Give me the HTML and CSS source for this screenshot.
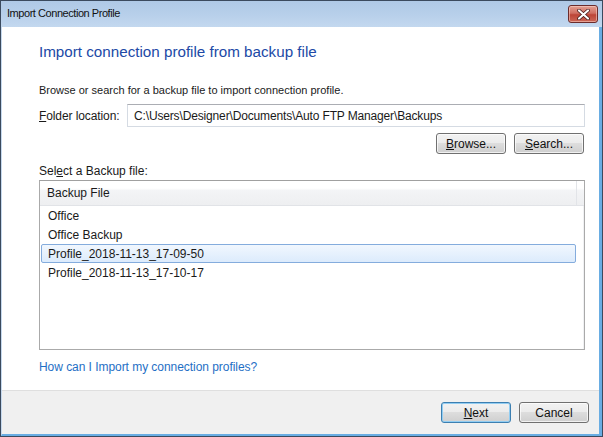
FILE: index.html
```html
<!DOCTYPE html>
<html>
<head>
<meta charset="utf-8">
<title>Import Connection Profile</title>
<link rel="stylesheet" href="styles.css">
</head>
<body>
<div class="window">
  <div class="titlebar">
    <span class="title">Import Connection Profile</span>
    <button class="close" aria-label="Close">
      <svg width="13" height="11" viewBox="0 0 13 11"><path d="M2 1.5 L11 9.5 M11 1.5 L2 9.5" stroke="#3a1414" stroke-width="3.6" stroke-linecap="round"/><path d="M2 1.5 L11 9.5 M11 1.5 L2 9.5" stroke="#ffffff" stroke-width="2.2" stroke-linecap="round"/></svg>
    </button>
  </div>
  <div class="client">
    <div class="content">
      <h1 class="heading">Import connection profile from backup file</h1>
      <p class="desc">Browse or search for a backup file to import connection profile.</p>
      <div class="folder-row">
        <label class="label"><u>F</u>older location:</label>
        <div class="input">C:\Users\Designer\Documents\Auto FTP Manager\Backups</div>
      </div>
      <div class="btn-row">
        <button class="btn"><u>B</u>rowse...</button>
        <button class="btn"><u>S</u>earch...</button>
      </div>
      <div class="select-label">Sel<u>e</u>ct a Backup file:</div>
      <div class="list">
        <div class="list-header">
          <div class="col">Backup File</div>
          <div class="col-end"></div>
        </div>
        <div class="rows">
          <div class="row">Office</div>
          <div class="row">Office Backup</div>
          <div class="row selected">Profile_2018-11-13_17-09-50</div>
          <div class="row">Profile_2018-11-13_17-10-17</div>
        </div>
      </div>
      <a class="link" href="#">How can I Import my connection profiles?</a>
    </div>
    <div class="footer">
      <button class="btn default"><u>N</u>ext</button>
      <button class="btn">Cancel</button>
    </div>
  </div>
</div>
</body>
</html>
```

FILE: styles.css
```css
html, body {
  margin: 0;
  padding: 0;
  background: #ffffff;
}

body {
  font-family: "Liberation Sans", Arial, sans-serif;
  font-size: 12px;
  color: #1a1a1a;
}

.window {
  width: 603px;
  height: 437px;
  box-sizing: border-box;
  border: 1px solid #3b4a5e;
  display: flex;
  flex-direction: column;
  background: #b9d1ea;
}

.titlebar {
  height: 26px;
  flex: none;
  display: flex;
  align-items: flex-start;
  justify-content: space-between;
  background: linear-gradient(to bottom, #afc9e6 0%, #b7cfea 50%, #c3d8ef 100%);
  padding: 0 4px 0 6px;
}

.title {
  margin-top: 6px;
  font-size: 11px;
  color: #111111;
  letter-spacing: -0.45px;
}

.close {
  margin-top: 4px;
  width: 30px;
  height: 18px;
  padding: 0;
  border: 1px solid #6b2c2c;
  border-radius: 3px;
  background: linear-gradient(to bottom, #e3a092 0%, #d06f62 45%, #bd4537 55%, #cb6757 100%);
  display: flex;
  align-items: center;
  justify-content: center;
  box-shadow: inset 0 0 0 1px rgba(255, 220, 210, 0.5);
}

.client {
  flex: 1;
  display: flex;
  flex-direction: column;
  border-left: 1px solid #c6d9ee;
  border-right: 3px solid #69ade3;
  border-bottom: 2px solid #69ade3;
  background: #ffffff;
}

.content {
  flex: 1;
  display: flex;
  flex-direction: column;
  padding: 0 14px 0 37px;
  background: #ffffff;
}

.heading {
  margin: 15px 0 0 0;
  font-size: 15.2px;
  line-height: 20px;
  font-weight: normal;
  color: #2149a6;
}

.desc {
  margin: 20px 0 0 0;
  font-size: 11px;
  line-height: 16px;
}

.folder-row {
  margin-top: 6px;
  height: 23px;
  display: flex;
  align-items: center;
}

.label {
  width: 88px;
  flex: none;
  letter-spacing: -0.1px;
}

.input {
  flex: 1;
  height: 23px;
  box-sizing: border-box;
  border: 1px solid #d5dbe3;
  border-top-color: #abadb3;
  padding: 0 6px;
  display: flex;
  align-items: center;
  line-height: 16px;
  letter-spacing: -0.15px;
}

.btn-row {
  margin-top: 6px;
  display: flex;
  justify-content: flex-end;
  gap: 8px;
  padding-right: 1px;
}

.btn {
  width: 70px;
  height: 21px;
  box-sizing: border-box;
  padding: 0;
  border: 1px solid #707070;
  border-radius: 3px;
  background: linear-gradient(to bottom, #f2f2f2 0%, #ebebeb 49%, #dddddd 50%, #cfcfcf 100%);
  box-shadow: inset 0 0 0 1px rgba(255, 255, 255, 0.7);
  font-family: "Liberation Sans", Arial, sans-serif;
  font-size: 12px;
  color: #111111;
}

.btn.default {
  border-color: #3c7fb1;
  box-shadow: inset 0 0 0 1px #92cdf2;
}

.select-label {
  margin-top: 9px;
  line-height: 16px;
}

.list {
  margin-top: 1px;
  height: 170px;
  box-sizing: border-box;
  border: 1px solid #aaaaaa;
  border-top-color: #a0a0a0;
  display: flex;
  flex-direction: column;
}

.list-header {
  height: 24px;
  flex: none;
  display: flex;
  background: linear-gradient(to bottom, #ffffff 0%, #ffffff 30%, #f3f4f6 40%, #eeeff1 100%);
  border-bottom: 1px solid #e1e3e7;
}

.col {
  flex: 1;
  display: flex;
  align-items: center;
  padding-left: 7px;
  border-right: 1px solid #e2e4e8;
}

.col-end {
  width: 7px;
}

.rows {
  flex: 1;
  display: flex;
  flex-direction: column;
  padding: 0 7px 0 1px;
  border-right: 1px solid #f0f1f3;
}

.row {
  height: 19px;
  box-sizing: border-box;
  display: flex;
  align-items: center;
  padding-left: 6px;
  border: 1px solid transparent;
}

.row.selected {
  border-color: #84acdd;
  border-radius: 2px;
  background: linear-gradient(to bottom, #f1f7fe 0%, #dcebfc 100%);
}

.link {
  margin-top: 9px;
  line-height: 16px;
  color: #1f6fc5;
  text-decoration: none;
  align-self: flex-start;
  letter-spacing: -0.05px;
}

.footer {
  height: 44px;
  flex: none;
  box-sizing: border-box;
  border-top: 1px solid #dfdfdf;
  background: #f0f0f0;
  display: flex;
  justify-content: flex-end;
  align-items: flex-start;
  gap: 8px;
  padding: 11px 10px 0 0;
}
```
